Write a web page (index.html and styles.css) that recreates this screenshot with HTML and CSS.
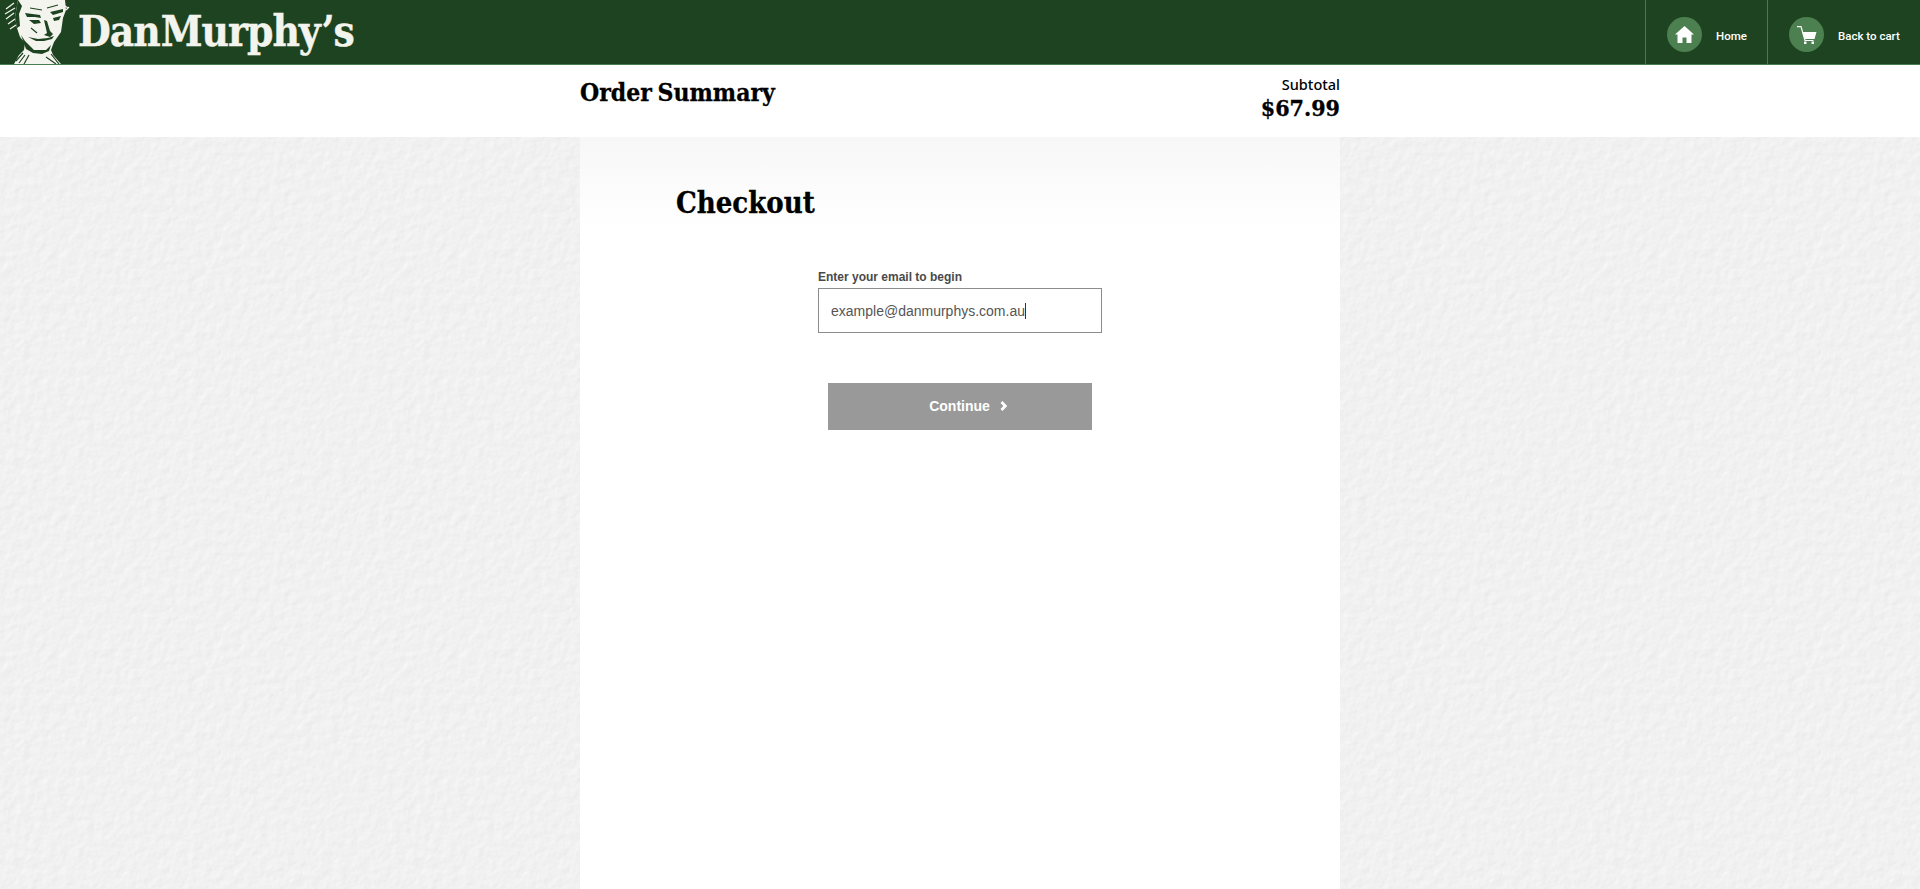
FILE: index.html
```html
<!DOCTYPE html>
<html>
<head>
    <meta charset="utf-8">
    <meta name="viewport" content="width=device-width, initial-scale=1">
    <title>Checkout</title>
    <link rel="stylesheet" href="styles.css">
</head>
<body>
    <header class="topbar">
        <div class="logo">
            <svg class="logo-face" width="72" height="64" viewBox="0 0 72 64">
                <!-- hair streaks -->
                <path fill="none" stroke="#f4f4ee" stroke-width="1.200" d="M6 9 L14 3 M5 14 L15 8 M6 19 L14 13 M8 24 L15 19 M10 29 L16 25 M62 4 L68 8 M66 10 L69 7"/>
                <!-- head, neck and shirt -->
                <path fill="#f4f4ee" d="M18 0 L65 0 L66 10 L63 18 L61 32 L54 42 L51 50 L53 55 L61 64 L14 64 L19 55 L24 50 L25 43 L20 37 L17 28 L15 17 Z"/>
                <!-- features -->
                <path fill="#1e4320" d="M18 0 L22 6 L19 14 L20 26 L17 28 L15 17 Z M25 13 L40 15 L41 18 L35 17 L27 17 Z M50 12 L63 9 L63 12 L53 15 Z M29 20 L39 20 L41 23 L34 24 Z M53 18 L61 16 L59 20 L54 21 Z M44 20 L47 21 L50 31 L53 34 L50 37 L44 35 L47 33 Z M28 37 L38 39 L48 38 L54 36 L52 39 L44 41 L36 41 Z M21 35 L25 41 L31 47 L34 50 L46 50 L51 45 L49 51 L42 54 L33 53 L26 49 Z"/>
                <path fill="none" stroke="#1e4320" stroke-width="1.200" d="M16 61 L23 53 M19 63 L25 55 M24 64 L29 55 M46 57 L56 64 M51 54 L59 64 M30 8 L42 10 M47 8 L58 5 M31 28 L37 33"/>
            </svg>
            <span class="logo-text">Dan<span class="logo-m">Murphy’s</span></span>
        </div>
        <nav class="topnav">
            <a class="navlink nav-home">
                <span class="navicon">
                    <svg width="19" height="17" viewBox="0 0 19 17"><path fill="#fff" d="M9.500 0 L19 8.500 L16.500 8.500 L16.500 17 L11.500 17 L11.500 11.500 L7.500 11.500 L7.500 17 L2.500 17 L2.500 8.500 L0 8.500 Z"/></svg>
                </span>
                <span class="navtext">Home</span>
            </a>
            <a class="navlink nav-cart">
                <span class="navicon">
                    <svg width="20" height="18" viewBox="0 0 20 18"><path fill="none" stroke="#fff" stroke-width="1.200" d="M0 .6 L4 .6 L8 14.500 L16.500 14.500"/><path fill="#fff" d="M5.500 6 L19.500 6 L17.500 13 L7.500 13 Z"/><rect fill="#fff" x="7" y="15.500" width="2.500" height="2.500"/><rect fill="#fff" x="14.500" y="15.500" width="2.500" height="2.500"/></svg>
                </span>
                <span class="navtext">Back to cart</span>
            </a>
        </nav>
    </header>

    <section class="summary">
        <div class="summary-inner">
            <h2 class="summary-title">Order Summary</h2>
            <div class="subtotal">
                <p class="subtotal-label">Subtotal</p>
                <p class="subtotal-price">$67.99</p>
            </div>
        </div>
    </section>

    <main class="panel">
        <h1 class="panel-title">Checkout</h1>
        <form class="email-form">
            <label class="email-label" for="email">Enter your email to begin</label>
            <div class="email-input" id="email">example@danmurphys.com.au<span class="caret"></span></div>
            <button class="continue" type="button">
                Continue
                <svg width="8" height="10" viewBox="0 0 8 10"><path fill="none" stroke="#fff" stroke-width="2.800" d="M1.500 1 L5.300 5 L1.500 9"/></svg>
            </button>
        </form>
    </main>
</body>
</html>
```

FILE: styles.css
```css
* {
    margin: 0;
    padding: 0;
    box-sizing: border-box;
}
body {
    height: 889px;
    overflow: hidden;
    display: flex;
    flex-direction: column;
    font-family: "Liberation Sans", Arial, sans-serif;
    background-color: #eeeeee;
    background-image: url("data:image/svg+xml,%3Csvg xmlns='http://www.w3.org/2000/svg' width='400' height='400'%3E%3Cfilter id='p' x='0' y='0' width='100%25' height='100%25' color-interpolation-filters='sRGB'%3E%3CfeTurbulence type='fractalNoise' baseFrequency='.11' numOctaves='4' stitchTiles='stitch'/%3E%3CfeDiffuseLighting surfaceScale='.16' diffuseConstant='1.090' lighting-color='%23fff'%3E%3CfeDistantLight azimuth='45' elevation='60'/%3E%3C/feDiffuseLighting%3E%3C/filter%3E%3Crect width='400' height='400' filter='url(%23p)'/%3E%3C/svg%3E");
}
.topbar {
    height: 65px;
    flex: none;
    display: flex;
    justify-content: space-between;
    background: #1e4320;
    border-bottom: 1px solid #4a8050;
}
.logo {
    display: flex;
    align-items: flex-start;
}
.logo-face {
    display: block;
    flex: none;
}
.logo-text {
    font-family: "DejaVu Serif Condensed", "DejaVu Serif", serif;
    font-weight: 700;
    font-size: 42px;
    line-height: 64px;
    letter-spacing: -1px;
    -webkit-text-stroke: .4px #f4f4ee;
    color: #f4f4ee;
    margin-left: 6px;
    white-space: nowrap;
}
.logo-m {
    margin-left: 1px;
}
.topnav {
    display: flex;
}
.navlink {
    display: flex;
    align-items: center;
    padding-top: 5px;
    border-left: 1px solid #4a7a50;
    color: #fff;
    font-family: Roboto, sans-serif;
    font-size: 11.500px;
    font-weight: 500;
}
.nav-home {
    width: 122px;
    padding-left: 21px;
}
.nav-cart {
    width: 153px;
    padding-left: 21px;
}
.navicon {
    width: 35px;
    height: 35px;
    border-radius: 50%;
    background: #4c8050;
    display: flex;
    align-items: center;
    justify-content: center;
    margin-right: 14px;
}
.navtext {
    padding-top: 2px;
}
.summary {
    height: 72px;
    flex: none;
    background: #fff;
}
.summary-inner {
    width: 760px;
    margin: 0 auto;
    display: flex;
    justify-content: space-between;
    color: #000;
}
.summary-title {
    font-family: "DejaVu Serif Condensed", "DejaVu Serif", serif;
    font-weight: 700;
    font-size: 24.500px;
    line-height: 26px;
    margin-top: 15px;
    word-spacing: -2px;
    -webkit-text-stroke: .3px #000;
}
.subtotal {
    text-align: right;
    padding-top: 11px;
}
.subtotal-label {
    font-family: "Noto Sans", sans-serif;
    font-size: 14.500px;
    font-weight: 500;
    line-height: 16px;
}
.subtotal-price {
    font-family: "DejaVu Serif Condensed", "DejaVu Serif", serif;
    font-weight: 700;
    font-size: 23px;
    line-height: 26px;
    margin-top: 3px;
    -webkit-text-stroke: .3px #000;
}
.panel {
    flex: 1;
    width: 760px;
    margin: 0 auto;
    background: linear-gradient(#f7f7f7, #ffffff 90px);
    padding: 50px 96px 0;
}
.panel-title {
    font-family: "DejaVu Serif Condensed", "DejaVu Serif", serif;
    font-weight: 700;
    font-size: 29px;
    line-height: 32px;
    color: #000;
    -webkit-text-stroke: .3px #000;
}
.email-form {
    width: 284px;
    margin: 51px auto 0;
}
.email-label {
    display: block;
    font-size: 12px;
    font-weight: 700;
    line-height: 14px;
    color: #4a4a4a;
    margin-bottom: 4px;
}
.email-input {
    height: 45px;
    border: 1px solid #8c8c8c;
    padding-left: 12px;
    font-size: 14px;
    line-height: 45px;
    color: #555;
    background: #fff;
}
.caret {
    display: inline-block;
    width: 1px;
    height: 16px;
    background: #333;
    vertical-align: -3px;
}
.continue {
    display: flex;
    align-items: center;
    justify-content: center;
    gap: 10px;
    width: 264px;
    height: 47px;
    margin: 50px auto 0;
    padding: 0 0 1px 17px;
    border: 0;
    background: #999;
    color: #fff;
    font-family: "Liberation Sans", Arial, sans-serif;
    font-size: 14px;
    font-weight: 700;
}
```
